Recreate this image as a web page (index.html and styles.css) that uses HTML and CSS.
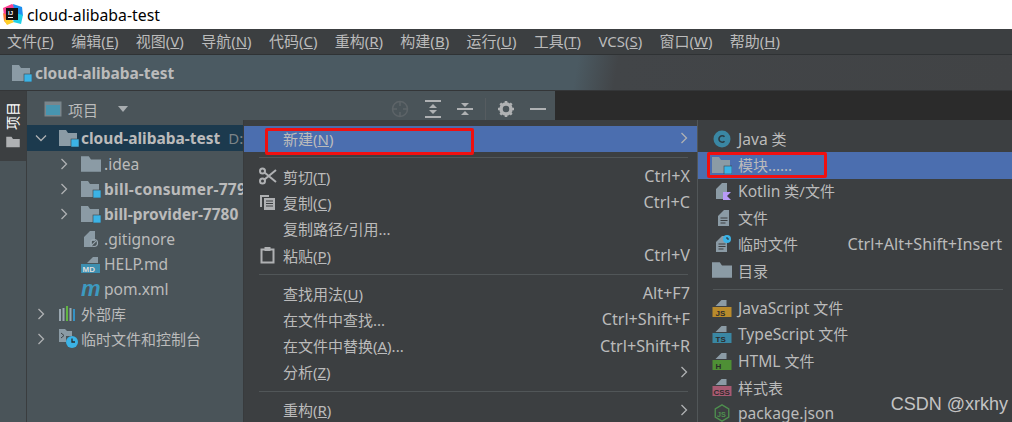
FILE: index.html
```html
<!DOCTYPE html>
<html lang="zh-CN">
<head>
    <meta charset="UTF-8">
    <meta name="viewport" content="width=device-width, initial-scale=1.0">
    <title>cloud-alibaba-test</title>
    <link rel="stylesheet" href="styles.css">
</head>
<body>
    <svg class="defs" width="0" height="0">
        <symbol id="folder" viewBox="0 0 18 16"><path d="M0 1h7l2 3h9v11H0z" fill="#8b9ba5"/></symbol>
        <symbol id="module" viewBox="0 0 20 18"><path d="M0 1h7l2 3h9v8h-6v5H0z" fill="#8b9ba5"/><rect x="12" y="10" width="8" height="8" fill="#3bb3e6" stroke="#3c4448" stroke-width=".6"/></symbol>
        <symbol id="file" viewBox="0 0 14 18"><path d="M1 7l6-6h5v16H1z" fill="#8b9ba5"/><path d="M3.500 9h7M3.500 11.500h7M3.500 14h5" stroke="#3c3f41" stroke-width="1.200"/></symbol>
        <symbol id="badge" viewBox="0 0 19 18"><path d="M3 7l6-6h5v6H3z" fill="#8b9ba5"/></symbol>
    </svg>

    <header class="titlebar">
        <svg class="logo" width="20" height="21" viewBox="0 0 20 21">
            <path d="M0 4l9-4 4 3-6 10-6-2z" fill="#fc3f8f"/>
            <path d="M10 0l9 3 1 9-8-2z" fill="#1c8ff0"/>
            <path d="M12 9l8 2-2 9-8-2z" fill="#1fd0e8"/>
            <path d="M0 9l8 4 2 5-6 2-3-3z" fill="#fe7a38"/>
            <path d="M1 16l5-2 5 4-7 3z" fill="#ffd028"/>
            <rect x="3" y="4" width="12" height="12" fill="#111"/>
            <text x="5" y="11" class="logo-text">IJ</text>
            <rect x="5" y="13" width="5" height="1" fill="#eee"/>
        </svg>
        <span>cloud-alibaba-test</span>
    </header>

    <nav class="menubar">
        <span>文件(<u>F</u>)</span>
        <span>编辑(<u>E</u>)</span>
        <span>视图(<u>V</u>)</span>
        <span>导航(<u>N</u>)</span>
        <span>代码(<u>C</u>)</span>
        <span>重构(<u>R</u>)</span>
        <span>构建(<u>B</u>)</span>
        <span>运行(<u>U</u>)</span>
        <span>工具(<u>T</u>)</span>
        <span>VCS(<u>S</u>)</span>
        <span>窗口(<u>W</u>)</span>
        <span>帮助(<u>H</u>)</span>
    </nav>

    <div class="crumbs">
        <svg class="ico-20"><use href="#module"/></svg>
        <b>cloud-alibaba-test</b>
    </div>

    <main class="workspace">
        <aside class="strip">
            <div class="strip-tab">
                <span class="strip-label">项目</span>
                <svg width="14" height="12" viewBox="0 0 18 16"><path d="M0 1h7l2 3h9v11H0z" fill="#afb1b3"/></svg>
            </div>
        </aside>

        <section class="project">
            <div class="project-head">
                <svg class="head-icon" width="18" height="16" viewBox="0 0 18 16"><rect x=".5" y=".5" width="17" height="15" fill="#7a868c"/><rect x="2" y="4" width="14" height="10" fill="#4795b0"/></svg>
                <span class="head-title">项目</span>
                <svg class="head-arrow" width="12" height="7" viewBox="0 0 12 7"><path d="M1 0h10L6 6z" fill="#a8adb0"/></svg>
                <div class="head-tools">
                    <svg width="18" height="18" viewBox="0 0 18 18" fill="none" stroke="#5d6468" stroke-width="1.500"><circle cx="9" cy="9" r="7.500"/><path d="M9 1v5M9 12v5M1 9h5M12 9h5"/></svg>
                    <svg width="16" height="18" viewBox="0 0 16 18" fill="#afb1b3"><rect width="16" height="2"/><rect y="16" width="16" height="2"/><path d="M8 4l4 4H4zM8 14l4-4H4z"/></svg>
                    <svg width="16" height="18" viewBox="0 0 16 18" fill="#afb1b3"><rect y="8" width="16" height="2"/><path d="M8 7L4 3h8zM8 11l4 4H4z"/></svg>
                    <span class="tool-sep"></span>
                    <svg width="16" height="16" viewBox="0 0 16 16"><circle cx="8" cy="8" r="5" fill="none" stroke="#afb1b3" stroke-width="3.500"/><path d="M8 0v3M8 13v3M0 8h3M13 8h3M2.300 2.300l2 2M11.700 11.700l2 2M13.700 2.300l-2 2M4.300 11.700l-2 2" stroke="#afb1b3" stroke-width="2.600"/></svg>
                    <svg width="16" height="2" viewBox="0 0 16 2"><rect width="16" height="2" fill="#afb1b3"/></svg>
                </div>
            </div>

            <ul class="tree">
                <li class="row row-root">
                    <svg class="caret" viewBox="0 0 12 12"><path d="M1 3.500l5 5 5-5"/></svg>
                    <svg class="ico-20"><use href="#module"/></svg>
                    <b>cloud-alibaba-test</b><span class="dim">D:</span>
                </li>
                <li class="row depth-2">
                    <svg class="caret" viewBox="0 0 12 12"><path d="M3.500 1l5 5-5 5"/></svg>
                    <svg class="ico-20"><use href="#folder"/></svg>
                    <span class="en">.idea</span>
                </li>
                <li class="row depth-2">
                    <svg class="caret" viewBox="0 0 12 12"><path d="M3.500 1l5 5-5 5"/></svg>
                    <svg class="ico-20"><use href="#module"/></svg>
                    <b class="wide">bill-consumer-7790</b>
                </li>
                <li class="row depth-2">
                    <svg class="caret" viewBox="0 0 12 12"><path d="M3.500 1l5 5-5 5"/></svg>
                    <svg class="ico-20"><use href="#module"/></svg>
                    <b>bill-provider-7780</b>
                </li>
                <li class="row depth-3">
                    <svg width="20" height="18" viewBox="0 0 20 18"><path d="M3 7l6-6h5v10h-3v6H3z" fill="#8b9ba5"/><circle cx="13" cy="13" r="3.500" fill="none" stroke="#9aa7b0" stroke-width="1.200"/><path d="M10.800 15.200l4.400-4.400" stroke="#9aa7b0" stroke-width="1.200"/></svg>
                    <span class="en">.gitignore</span>
                </li>
                <li class="row depth-3">
                    <svg width="20" height="19" viewBox="0 0 20 19"><path d="M6 9l6-6h5v6z" fill="#8b9ba5"/><rect y="10" width="19" height="9" fill="#3d8fb0"/><text x="1.500" y="17.500" class="tag-text tag-dark">MD</text></svg>
                    <span class="en">HELP.md</span>
                </li>
                <li class="row depth-3">
                    <span class="maven">m</span>
                    <span class="en">pom.xml</span>
                </li>
                <li class="row depth-1">
                    <svg class="caret" viewBox="0 0 12 12"><path d="M3.500 1l5 5-5 5"/></svg>
                    <svg width="19" height="16" viewBox="0 0 19 16"><rect y="3" width="2" height="12" fill="#9aa7b0"/><rect x="3.500" y="2" width="2" height="13" fill="#9aa7b0"/><rect x="7" y="0" width="2" height="15" fill="#62b543"/><rect x="10.500" y="2" width="2" height="13" fill="#9aa7b0"/><rect x="14" y="3" width="2" height="12" fill="#3592c4"/></svg>
                    <span>外部库</span>
                </li>
                <li class="row depth-1">
                    <svg class="caret" viewBox="0 0 12 12"><path d="M3.500 1l5 5-5 5"/></svg>
                    <svg width="19" height="19" viewBox="0 0 19 19"><path d="M0 0h6l2 2h5v5H7v6H0z" fill="#8b9ba5"/><path d="M2 4l3 2.500L2 9" fill="none" stroke="#3c4448"/><circle cx="13" cy="13" r="6" fill="#3bb3e6"/><path d="M13 9.500V13h3" fill="none" stroke="#2b2b2b" stroke-width="1.300"/></svg>
                    <span>临时文件和控制台</span>
                </li>
            </ul>
        </section>

        <div class="editor"></div>

        <div class="popup">
            <ul class="menu menu-main">
                <li class="item active">
                    <span class="slot"></span><span class="label">新建(<u>N</u>)</span>
                    <svg class="more" viewBox="0 0 8 12"><path d="M1.500 1l5 5-5 5"/></svg>
                </li>
                <li class="sep"></li>
                <li class="item">
                    <svg class="slot" viewBox="0 0 18 18" fill="none" stroke="#afb1b3" stroke-width="2"><circle cx="3.500" cy="4" r="2.500"/><circle cx="3.500" cy="14" r="2.500"/><path d="M5.500 5.500L17 15M5.500 12.500L17 3"/></svg>
                    <span class="label">剪切(<u>T</u>)</span><span class="keys">Ctrl+X</span>
                </li>
                <li class="item">
                    <svg class="slot" viewBox="0 0 18 18"><path d="M1 2h9v2H3v10H1z" fill="#afb1b3"/><rect x="5" y="5" width="11" height="12" fill="#afb1b3"/><path d="M7 8h7M7 10.500h7M7 13h7" stroke="#3c3f41"/></svg>
                    <span class="label">复制(<u>C</u>)</span><span class="keys">Ctrl+C</span>
                </li>
                <li class="item">
                    <span class="slot"></span><span class="label">复制路径/引用...</span>
                </li>
                <li class="item">
                    <svg class="slot" viewBox="0 0 18 18"><rect x="2.500" y="3.500" width="12" height="13" fill="none" stroke="#afb1b3" stroke-width="2"/><rect x="5.500" y="1" width="6" height="4" fill="#afb1b3"/></svg>
                    <span class="label">粘贴(<u>P</u>)</span><span class="keys">Ctrl+V</span>
                </li>
                <li class="sep"></li>
                <li class="item">
                    <span class="slot"></span><span class="label">查找用法(<u>U</u>)</span><span class="keys">Alt+F7</span>
                </li>
                <li class="item">
                    <span class="slot"></span><span class="label">在文件中查找...</span><span class="keys">Ctrl+Shift+F</span>
                </li>
                <li class="item">
                    <span class="slot"></span><span class="label">在文件中替换(<u>A</u>)...</span><span class="keys">Ctrl+Shift+R</span>
                </li>
                <li class="item">
                    <span class="slot"></span><span class="label">分析(<u>Z</u>)</span>
                    <svg class="more" viewBox="0 0 8 12"><path d="M1.500 1l5 5-5 5"/></svg>
                </li>
                <li class="sep"></li>
                <li class="item">
                    <span class="slot"></span><span class="label">重构(<u>R</u>)</span>
                    <svg class="more" viewBox="0 0 8 12"><path d="M1.500 1l5 5-5 5"/></svg>
                </li>
            </ul>

            <ul class="menu menu-sub">
                <li class="item">
                    <svg class="slot" viewBox="0 0 18 18"><circle cx="9" cy="9" r="8.500" fill="#3a87a3"/><path d="M11.500 6.800A3.200 3.200 0 1 0 11.500 11.200" fill="none" stroke="#2b3b42" stroke-width="1.600"/></svg>
                    <span class="label"><span class="en">Java</span> 类</span>
                </li>
                <li class="item active">
                    <svg class="slot"><use href="#module"/></svg>
                    <span class="label">模块......</span>
                </li>
                <li class="item">
                    <svg class="slot" viewBox="0 0 18 18"><path d="M3 7l6-6h5v9h-3v7H3z" fill="#8b9ba5"/><path d="M10 10h8l-4 4 4 4h-8z" fill="#b99bf8"/></svg>
                    <span class="label"><span class="en">Kotlin</span> 类/文件</span>
                </li>
                <li class="item">
                    <svg class="slot" viewBox="-2 0 18 18"><use href="#file"/></svg>
                    <span class="label">文件</span>
                </li>
                <li class="item">
                    <svg class="slot" viewBox="-2 0 18 18"><use href="#file" width="14" height="18"/><circle cx="12" cy="4" r="4" fill="#3bb3e6"/><path d="M12 2v2h2" fill="none" stroke="#2b2b2b"/></svg>
                    <span class="label">临时文件</span><span class="keys">Ctrl+Alt+Shift+Insert</span>
                </li>
                <li class="item">
                    <svg class="slot" viewBox="0 0 18 16"><use href="#folder"/></svg>
                    <span class="label">目录</span>
                </li>
                <li class="sep"></li>
                <li class="item">
                    <svg class="slot" viewBox="0 0 19 18"><use href="#badge"/><rect y="8" width="19" height="10" fill="#b98b2c"/><text x="3" y="16.500" class="tag-text">JS</text></svg>
                    <span class="label"><span class="en">JavaScript</span> 文件</span>
                </li>
                <li class="item">
                    <svg class="slot" viewBox="0 0 19 18"><use href="#badge"/><rect y="8" width="19" height="10" fill="#3a87a3"/><text x="3" y="16.500" class="tag-text">TS</text></svg>
                    <span class="label"><span class="en">TypeScript</span> 文件</span>
                </li>
                <li class="item">
                    <svg class="slot" viewBox="0 0 19 18"><use href="#badge"/><rect y="8" width="19" height="10" fill="#4e8f35"/><text x="3" y="16.500" class="tag-text">H</text></svg>
                    <span class="label"><span class="en">HTML</span> 文件</span>
                </li>
                <li class="item">
                    <svg class="slot" viewBox="0 0 19 18"><use href="#badge"/><rect y="8" width="19" height="10" fill="#a85a72"/><text x="1" y="16.500" class="tag-text">CSS</text></svg>
                    <span class="label">样式表</span>
                </li>
                <li class="item">
                    <svg class="slot" viewBox="0 0 18 20"><path d="M9 1l7.500 4.500v9L9 19l-7.500-4.500v-9z" fill="none" stroke="#4e8f4e" stroke-width="1.500"/><text x="3.500" y="14" class="node-text">JS</text></svg>
                    <span class="label en">package.json</span>
                </li>
            </ul>

            <div class="mark mark-new"></div>
            <div class="mark mark-module"></div>
        </div>
    </main>

    <div class="watermark">CSDN @xrkhy</div>
</body>
</html>
```

FILE: styles.css
```css
* {
    box-sizing: border-box;
}
html, body {
    height: 100%;
}
body {
    margin: 0;
    display: flex;
    flex-direction: column;
    position: relative;
    overflow: hidden;
    background: #3c3f41;
    color: #bbbbbb;
    font-family: "Noto Sans", "Noto Sans CJK SC", sans-serif;
    font-size: 15px;
}
ul {
    list-style: none;
    margin: 0;
    padding: 0;
}
u {
    text-underline-offset: 1px;
}
b {
    font-size: 15.500px;
}
.defs {
    position: absolute;
}
.en {
    font-size: 15.600px;
}
.ico-20 {
    width: 20px;
    height: 18px;
    flex: none;
}

.titlebar {
    height: 29px;
    flex: none;
    display: flex;
    align-items: center;
    gap: 4px;
    padding-left: 3px;
    background: #ffffff;
    color: #000000;
    font-size: 15.800px;
}
.logo-text {
    font: bold 6px "Liberation Sans", sans-serif;
    fill: #ffffff;
}

.menubar {
    height: 26px;
    flex: none;
    display: flex;
    align-items: center;
    gap: 17.300px;
    padding: 0 0 2px 7px;
    background: #3c3f41;
    border-bottom: 1px solid #2f3234;
    white-space: nowrap;
}

.crumbs {
    height: 36px;
    flex: none;
    display: flex;
    align-items: center;
    gap: 3px;
    padding-left: 12px;
    background: linear-gradient(100deg, #4b5a62 0, #4b5a62 570px, #424548 610px, #414345 100%);
    border-bottom: 1px solid #343638;
}

.workspace {
    flex: 1;
    min-height: 0;
    display: flex;
    position: relative;
}

.strip {
    width: 27px;
    flex: none;
    background: #4a5459;
    border-right: 1px solid #3a3d3f;
}
.strip-tab {
    height: 70px;
    background: #3c3f41;
    display: flex;
    flex-direction: column;
    align-items: center;
    gap: 6px;
    padding-top: 11px;
}
.strip-label {
    writing-mode: vertical-rl;
    text-orientation: sideways;
    transform: rotate(180deg);
    color: #ffffff;
    font-size: 14px;
    line-height: 14px;
}

.project {
    width: 528px;
    flex: none;
    background: #4a5459;
}
.project-head {
    height: 34px;
    display: flex;
    align-items: center;
    padding: 2px 9px 0 17px;
}
.head-title {
    margin-left: 6px;
}
.head-arrow {
    margin-left: 19px;
}
.head-tools {
    margin-left: auto;
    display: flex;
    align-items: center;
    gap: 16px;
}
.tool-sep {
    width: 1px;
    height: 22px;
    background: #565c60;
    margin: 0 -4px;
}
.editor {
    flex: 1;
    background: #2b2b2b;
}

.row {
    height: 25px;
    display: flex;
    align-items: center;
    gap: 3px;
    white-space: nowrap;
}
.row-root {
    height: 26px;
    padding-left: 8px;
    background: #1c3a4e;
}
.row-root svg:nth-child(2), .depth-1 svg:nth-child(2) {
    margin-left: 9px;
}
.row-root b {
    margin-left: -1px;
}
.depth-1 {
    padding-left: 8px;
}
.depth-2 {
    padding-left: 31px;
}
.depth-2 svg:nth-child(2) {
    margin-left: 8px;
}
.depth-3 {
    padding-left: 54px;
}
.wide {
    letter-spacing: .3px;
}
.caret {
    width: 12px;
    height: 12px;
    flex: none;
    fill: none;
    stroke: #afb1b3;
    stroke-width: 1.300;
}
.dim {
    color: #7c8488;
    margin-left: 5px;
}
.maven {
    width: 20px;
    color: #3d9ac0;
    font: italic bold 22px/18px "Liberation Sans", sans-serif;
}
.tag-text {
    font: bold 8px "Liberation Sans", sans-serif;
    fill: #2b2b2b;
}
.tag-dark {
    fill: #dddddd;
}
.node-text {
    font: bold 8px "Liberation Sans", sans-serif;
    fill: #4e8f4e;
}

.popup {
    position: absolute;
    left: 243px;
    top: 29px;
    right: 0;
    bottom: 0;
    display: flex;
    overflow: hidden;
    background: #3c3f41;
}
.menu {
    padding-top: 6px;
    position: relative;
}
.menu-main {
    width: 454px;
    flex: none;
    border-left: 1px solid #383b3d;
}
.menu-sub {
    flex: 1;
    border-left: 1px solid #515658;
}
.menu-sub .slot {
    margin-right: 6px;
}
.item {
    height: 26.300px;
    display: flex;
    align-items: center;
    padding: 0 9px 2px 14px;
    white-space: nowrap;
}
.menu-sub .item {
    padding-bottom: 1px;
}
.active {
    background: #4b6eaf;
}
.slot {
    width: 20px;
    height: 18px;
    flex: none;
    margin-right: 5px;
}
.keys {
    margin: 0 -2px 0 auto;
    font-size: 16.200px;
}
.menu-sub .keys {
    margin-right: 1px;
}
.more {
    width: 8px;
    height: 12px;
    margin-left: auto;
    fill: none;
    stroke: #afb1b3;
    stroke-width: 1.300;
}
.sep {
    height: 11.700px;
    padding-top: 5px;
    margin: 0 9px 0 15px;
}
.sep::before {
    content: "";
    display: block;
    height: 1px;
    background: #515658;
}

.mark {
    position: absolute;
    border: 3px solid #f01010;
    border-radius: 2px;
}
.mark-new {
    left: 22px;
    top: 8px;
    width: 209px;
    height: 27px;
}
.mark-module {
    left: 464px;
    top: 32px;
    width: 120px;
    height: 26px;
}

.watermark {
    position: absolute;
    right: 4px;
    bottom: 7px;
    color: #c4c4c4;
    font: 18px "Liberation Sans", sans-serif;
}
```
